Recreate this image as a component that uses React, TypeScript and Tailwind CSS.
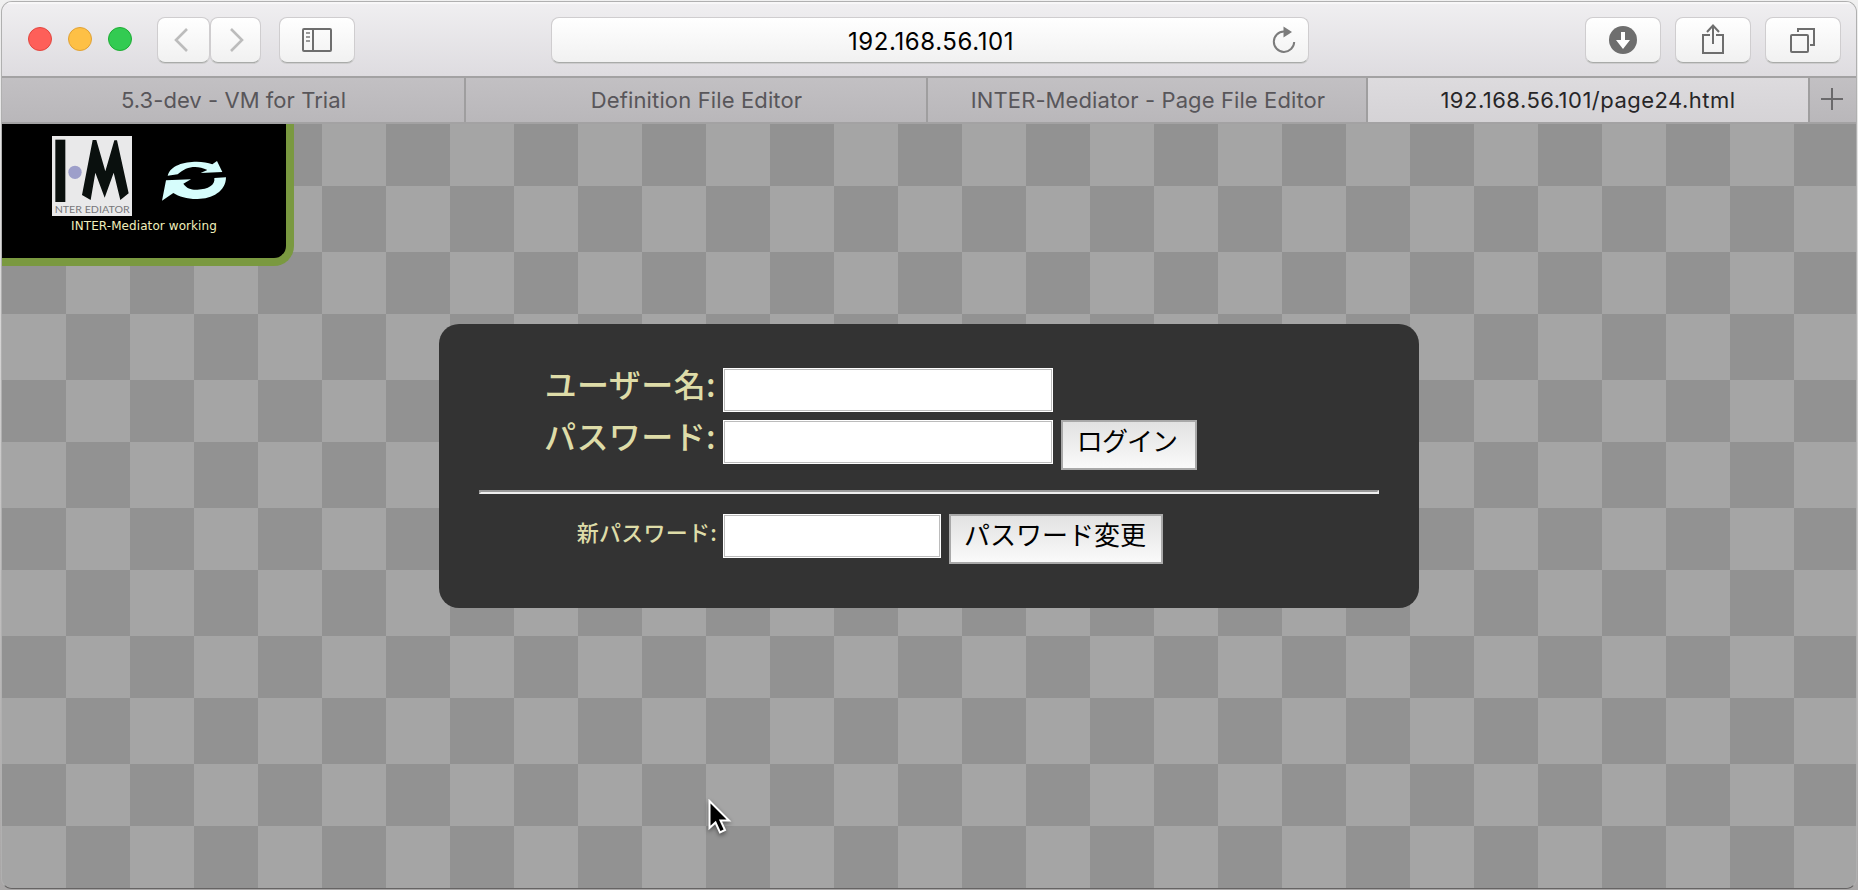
import type { ReactNode } from "react";

function ToolButton({ className, children }: { className: string; children: ReactNode }) {
  return (
    <button
      className={`flex h-[46px] shrink-0 items-center justify-center rounded-[8px] border border-[#cfcdcf] border-b-[#a9aba9] bg-linear-to-b from-white to-[#f1f1f1] shadow-[0_1px_0_#cdcccd] ${className}`}
    >
      {children}
    </button>
  );
}

function Logo() {
  return (
    <svg width="80" height="80" viewBox="0 0 240 240" className="shrink-0">
      <rect width="240" height="240" fill="#e9e9ea" />
      <rect x="10" y="11" width="30" height="187" fill="#0a100e" />
      <circle cx="69" cy="109" r="20" fill="#9d9fca" />
      <path
        d="M122 12H133L160 106L187 13H195L230 172L205 192L185 110L158 185L130 110L116 192L90 177Z"
        fill="#0a100e"
      />
      <text
        x="8"
        y="231"
        textLength="225"
        lengthAdjust="spacingAndGlyphs"
        fontFamily="Lato, sans-serif"
        fontSize="30"
        fill="#77777a"
      >
        NTER EDIATOR
      </text>
    </svg>
  );
}

function SyncArrows() {
  return (
    <svg width="65" height="41" viewBox="486 150 195 123" className="mt-[24px] shrink-0">
      <g fill="#d6fdfc">
        <path d="M503 197C511 166 552 155 590 155C608 155 624 158 637 163L651 153L667 186L602 189L622 180C590 164 558 169 533 193Z" />
        <path d="M498 211L573 208L550 221C560 236 576 240 592 239C625 238 646 225 643 204L678 202C678 245 634 268 590 267C560 267 537 260 520 249L486 272Z" />
      </g>
    </svg>
  );
}

function Field({ className }: { className: string }) {
  return (
    <input
      className={`h-[44px] shrink-0 border border-white bg-white p-2 text-2xl shadow-[inset_0_0_0_1px_#bcbcbc] outline-none ${className}`}
    />
  );
}

function FormButton({ className, children }: { className: string; children: ReactNode }) {
  return (
    <button
      className={`h-[50px] shrink-0 border-2 border-[#a9a9a9] bg-linear-to-b from-[#e2e2e2] to-[#fafafa] pb-[10px] text-[26px] leading-[36px] whitespace-nowrap text-black ${className}`}
    >
      {children}
    </button>
  );
}

function Tab({ className, children }: { className: string; children: ReactNode }) {
  return (
    <div
      className={`flex shrink-0 items-center justify-center border-r-2 border-[#9f9e9f] pt-px text-[22px] whitespace-nowrap ${className}`}
    >
      {children}
    </div>
  );
}

export default function App() {
  return (
    <div className="h-[890px] w-[1858px] overflow-hidden bg-linear-to-b from-[#f0f0f0] to-[#a8a6a6] p-px">
      <div className="flex h-[888px] w-[1856px] flex-col overflow-hidden rounded-[11px] border border-[#b0b0b0] border-b-[#666464] font-['Inter','Noto_Sans_CJK_JP',sans-serif]">
        <header className="flex h-[74px] shrink-0 items-start bg-linear-to-b from-[#f0eff1] to-[#dedce0] pt-[15px] shadow-[inset_0_2px_0_#f8f7f8]">
          <div className="ml-[26px] flex gap-4 pt-[10px]">
            <span className="size-6 rounded-full border border-[#e2463f] bg-[#fe5f59]" />
            <span className="size-6 rounded-full border border-[#e0a135] bg-[#fec045]" />
            <span className="size-6 rounded-full border border-[#1dad33] bg-[#33cb52]" />
          </div>
          <ToolButton className="ml-[25px] w-[53px]">
            <svg width="14" height="26" viewBox="0 0 14 26" className="mr-1.5" fill="none" stroke="#bcbcbc" strokeWidth="2.6">
              <path d="M13 2L2 13L13 24" />
            </svg>
          </ToolButton>
          <ToolButton className="w-[51px]">
            <svg width="14" height="26" viewBox="0 0 14 26" className="ml-0.5" fill="none" stroke="#bcbcbc" strokeWidth="2.6">
              <path d="M1 2L12 13L1 24" />
            </svg>
          </ToolButton>
          <ToolButton className="ml-[18px] w-[76px]">
            <svg width="30" height="24" viewBox="0 0 30 24" fill="none" stroke="#6e6e6e" strokeWidth="2">
              <rect x="1" y="1" width="28" height="22" rx="1" />
              <path d="M11 1V23" />
              <path d="M4 5H8M4 9H8M4 13H8" stroke="#9a9a9a" />
            </svg>
          </ToolButton>
          <div className="ml-[196px] flex h-[46px] w-[758px] shrink-0 items-center rounded-[8px] border border-[#cfcdcf] border-b-[#a9aba9] bg-linear-to-b from-white to-[#f1f1f1] pr-3 pl-11 shadow-[0_1px_0_#cdcccd]">
            <span className="flex-1 pt-1 pr-1.5 text-center text-[24px] tracking-[0.6px] text-black">192.168.56.101</span>
            <svg width="24" height="28" viewBox="0 0 24 28" fill="none" stroke="#7c7c7c" strokeWidth="2">
              <path d="M12 5.5A10.2 10.2 0 1 0 22.2 16" />
              <path d="M11.5 0.5V11.5L20 6Z" fill="#7c7c7c" stroke="none" />
            </svg>
          </div>
          <div className="ml-[276px] flex gap-[14px]">
            <ToolButton className="w-[76px]">
              <svg width="28" height="28" viewBox="0 0 28 28">
                <circle cx="14" cy="14" r="14" fill="#6e6e6e" />
                <path d="M12 6H16V14H21L14 23L7 14H12Z" fill="#fff" />
              </svg>
            </ToolButton>
            <ToolButton className="w-[76px]">
              <svg width="24" height="32" viewBox="0 0 24 32" className="mb-0.5" fill="none" stroke="#6e6e6e" strokeWidth="2">
                <path d="M9 12H2V30H22V12H15" />
                <path d="M12 21V3M6 9L12 2.5L18 9" />
              </svg>
            </ToolButton>
            <ToolButton className="w-[76px]">
              <svg width="26" height="26" viewBox="0 0 26 26" className="mr-0.5" fill="none" stroke="#6e6e6e" strokeWidth="2">
                <rect x="2" y="8" width="17" height="17" rx="1" />
                <path d="M9 5V2H25V18H21" />
              </svg>
            </ToolButton>
          </div>
        </header>

        <nav className="flex h-[48px] shrink-0 border-y-2 border-[#a3a2a3] bg-linear-to-b from-[#c2c0c3] to-[#b9b7ba] text-[#58565a]">
          <Tab className="w-[464px] pl-px tracking-[0.05px]">5.3-dev - VM for Trial</Tab>
          <Tab className="w-[462px] pl-px tracking-[0.13px]">Definition File Editor</Tab>
          <Tab className="w-[440px] pl-0.5 tracking-[0.1px]">INTER-Mediator - Page File Editor</Tab>
          <Tab className="w-[442px] bg-linear-to-b from-[#dddbde] to-[#d5d3d6] tracking-[0.48px] text-[#272628]">192.168.56.101/page24.html</Tab>
          <div className="flex flex-1 items-center justify-center">
            <svg width="22" height="22" viewBox="0 0 22 22" className="mr-0.5 mb-0.5" stroke="#6a696b" strokeWidth="2">
              <path d="M11 0V22M0 11H22" />
            </svg>
          </div>
        </nav>

        <main className="relative flex-1 bg-[conic-gradient(at_64px_62px,#a5a5a5_25%,#929292_0_50%,#a5a5a5_0_75%,#929292_0)] bg-size-[128px_128px]">
          <aside className="flex h-[142px] w-[292px] flex-col rounded-br-[20px] border-r-8 border-b-8 border-[#7a9940] bg-black pt-3">
            <div className="flex gap-[30px] pl-[50px]">
              <Logo />
              <SyncArrows />
            </div>
            <p className="text-center font-['DejaVu_Sans',sans-serif] text-[12px] leading-[20px] tracking-[0.08px] text-[#f0efbc]">
              INTER-Mediator working
            </p>
          </aside>

          <form className="mt-[58px] ml-[437px] h-[284px] w-[980px] rounded-[20px] bg-[#333] px-10 pt-11 font-['Noto_Sans_CJK_JP',sans-serif] text-[#dedca8]">
            <div className="flex h-[52px] items-start">
              <label className="w-[238px] pr-px text-right text-[32px] leading-[30px] font-medium tracking-[0.4px] whitespace-nowrap">ユーザー名:</label>
              <Field className="ml-[6px] w-[330px]" />
            </div>
            <div className="flex h-[70px] items-start">
              <label className="w-[238px] pr-px text-right text-[32px] leading-[30px] font-medium tracking-[0.4px] whitespace-nowrap">パスワード:</label>
              <Field className="ml-[6px] w-[330px]" />
              <FormButton className="ml-2 w-[136px] pr-[4px] tracking-[-0.9px]">ログイン</FormButton>
            </div>
            <hr className="h-1 border-2 border-t-[#999] border-r-[#eee] border-b-[#eee] border-l-[#999]" />
            <div className="mt-5 flex items-start">
              <label className="w-[238px] text-right text-[22px] leading-[34px] font-medium tracking-[0.25px] whitespace-nowrap">新パスワード:</label>
              <Field className="ml-[6px] w-[218px]" />
              <FormButton className="ml-2 w-[214px] pr-0.5">パスワード変更</FormButton>
            </div>
          </form>

          <svg
            width="24"
            height="38"
            viewBox="0 0 24 38"
            className="absolute top-[675px] left-[706px] drop-shadow-[0_2px_2px_rgba(0,0,0,0.45)]"
          >
            <path d="M1.5 2V29L7.5 23.5L12 33.5L17 31L12.5 21.5H21Z" fill="#000" stroke="#fff" strokeWidth="2" />
          </svg>
        </main>
      </div>
    </div>
  );
}
